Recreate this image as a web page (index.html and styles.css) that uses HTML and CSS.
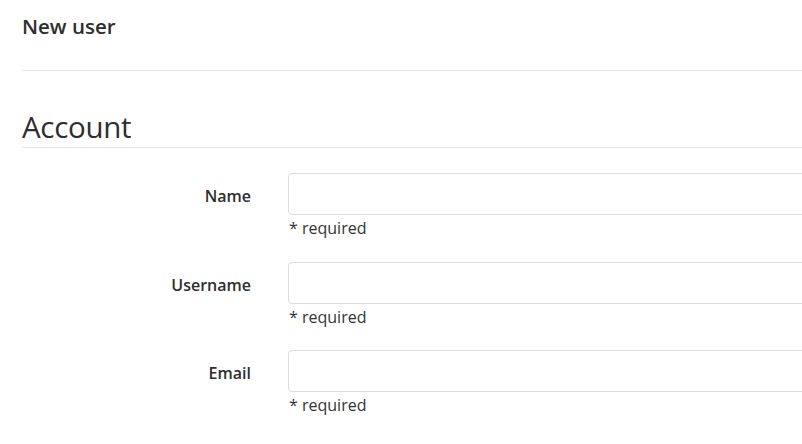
FILE: index.html
```html
<!DOCTYPE html>
<html>
<head>
<meta charset="utf-8">
<link rel="stylesheet" href="styles.css">
</head>
<body>
<div class="page">
  <header class="page-header">
    <h1 class="page-title">New user</h1>
  </header>
  <section class="section">
    <h2 class="section-title">Account</h2>
    <form class="form">
      <div class="row">
        <label class="label" for="name">Name</label>
        <div class="field">
          <input class="input" id="name" type="text">
          <div class="help">* required</div>
        </div>
      </div>
      <div class="row">
        <label class="label" for="username">Username</label>
        <div class="field">
          <input class="input" id="username" type="text">
          <div class="help">* required</div>
        </div>
      </div>
      <div class="row">
        <label class="label" for="email">Email</label>
        <div class="field">
          <input class="input" id="email" type="text">
          <div class="help">* required</div>
        </div>
      </div>
    </form>
  </section>
</div>
</body>
</html>
```

FILE: styles.css
```css
html, body {
  margin: 0;
  padding: 0;
  background: #fff;
  overflow: hidden;
}
body {
  font-family: "Open Sans", "Noto Sans", sans-serif;
  color: #2e2e2e;
}
.page {
  width: 1100px;
  padding-left: 22px;
}
.page-header {
  height: 71px;
  border-bottom: 1px solid #e5e5e5;
  box-sizing: border-box;
  display: flex;
  align-items: flex-start;
}
.page-title {
  margin: 12px 0 0;
  font-size: 20.5px;
  font-weight: 600;
  line-height: 28px;
}
.section {
  padding-top: 36px;
}
.section-title {
  margin: 0;
  font-size: 29.5px;
  font-weight: 400;
  line-height: 40px;
  border-bottom: 1px solid #e5e5e5;
  letter-spacing: -0.3px;
}
.form {
  padding-top: 25px;
  display: flex;
  flex-direction: column;
  gap: 22.5px;
}
.row {
  display: grid;
  grid-template-columns: 230px 1fr;
  column-gap: 36px;
}
.label {
  text-align: right;
  font-size: 16px;
  font-weight: 600;
  height: 42px;
  line-height: 46px;
  padding-right: 1px;
}
.input {
  display: block;
  width: 100%;
  height: 42px;
  box-sizing: border-box;
  border: 1px solid #dcdcdc;
  border-radius: 4px;
  background: #fff;
  margin: 0;
}
.help {
  font-size: 16px;
  line-height: 21px;
  padding-top: 3px;
  color: #333;
  padding-left: 1px;
}
```
